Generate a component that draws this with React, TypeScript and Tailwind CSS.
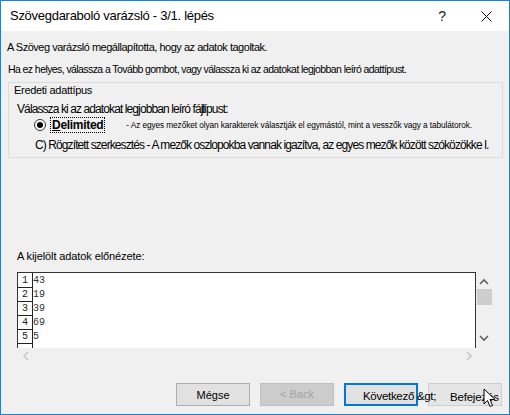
import React from 'react'

const rows = ['43', '19', '39', '69', '5', '']

function Chevron({ dir }: { dir: 'up' | 'down' | 'left' | 'right' }) {
  const paths = {
    up: 'M1 6 L5 2 L9 6',
    down: 'M1 2 L5 6 L9 2',
    left: 'M6 1 L2 5 L6 9',
    right: 'M2 1 L6 5 L2 9',
  }
  const size = dir === 'up' || dir === 'down' ? { w: 10, h: 8 } : { w: 8, h: 10 }
  return (
    <svg width={size.w} height={size.h} viewBox={`0 0 ${size.w} ${size.h}`} fill="none">
      <path d={paths[dir]} stroke="currentColor" strokeWidth="1.6" />
    </svg>
  )
}

export default function App() {
  return (
    <div className="relative flex h-[415px] w-[510px] flex-col border border-[#1883d7] bg-[#f0f0f0] font-['Liberation_Sans',Arial,sans-serif] text-black">
      {/* title bar */}
      <div className="flex h-[30px] shrink-0 items-center bg-white pl-[9px]">
        <span className="whitespace-nowrap text-[13px] tracking-[-0.28px]">Szövegdaraboló varázsló - 3/1. lépés</span>
        <span className="ml-auto mr-[35px] text-[14px] text-[#222]">?</span>
        <svg width="11" height="11" viewBox="0 0 11 11" className="mr-[17px]">
          <path d="M0.5 0.5 L10.5 10.5 M10.5 0.5 L0.5 10.5" stroke="#111" strokeWidth="1" />
        </svg>
      </div>

      <div className="mt-[8px] flex h-[16px] items-center whitespace-nowrap pl-[6px] text-[11px] tracking-[-0.48px]">
        A Szöveg varázsló megállapította, hogy az adatok tagoltak.
      </div>
      <div className="mt-[7px] flex h-[16px] items-center whitespace-nowrap pl-[7px] text-[10.5px] tracking-[-0.58px]">
        Ha ez helyes, válassza a Tovább gombot, vagy válassza ki az adatokat legjobban leíró adattípust.
      </div>

      {/* group box */}
      <div className="ml-[7px] mt-[4px] h-[76px] w-[495px] border border-[#dcdcdc]">
        <div className="flex h-[14px] items-center pl-[5px] text-[11px] tracking-[-0.3px]">Eredeti adattípus</div>
        <div className="mt-[4px] flex h-[16px] items-center whitespace-nowrap pl-[8px] text-[12px] tracking-[-0.9px]">
          Válassza ki az adatokat legjobban leíró fájl<span className="-ml-[3px]">típust:</span>
        </div>
        <div className="flex h-[16px] items-center whitespace-nowrap pl-[25px]">
          <div className="flex h-[12px] w-[12px] shrink-0 items-center justify-center rounded-full border border-[#333] bg-white">
            <div className="h-[6px] w-[6px] rounded-full bg-black" />
          </div>
          <div className="ml-[4px] flex h-[16px] items-center border border-dotted border-black px-[1px] text-[12px] font-semibold tracking-[-0.3px]">
            <span className="underline">D</span>elimited
          </div>
          <span className="ml-[21px] text-[8.3px] tracking-[-0.1px]">
            - Az egyes mezőket olyan karakterek választják el egymástól, mint a vesszők vagy a tabulátorok.
          </span>
        </div>
        <div className="mt-[4px] flex h-[16px] items-center whitespace-nowrap pl-[26px] text-[12px] tracking-[-0.9px]">
          C) Rögzített szerkesztés - A mezők oszlopokba vannak igazítva, az egyes mezők között szóközökke l.
        </div>
      </div>

      <div className="mt-[90px] flex h-[16px] items-center whitespace-nowrap pl-[16px] text-[11px] tracking-[-0.1px]">
        A kijelölt adatok előnézete:
      </div>

      {/* preview */}
      <div className="mt-[8px] flex h-[76px] pl-[16px]">
        <div className="h-[76px] w-[459px] overflow-hidden border-x border-t border-[#333] bg-white">
          {rows.map((value, index) => (
            <div key={index} className="flex h-[14px] font-['Liberation_Mono',monospace] text-[10px]">
              <div className="flex h-[15px] w-[15px] items-center justify-center border-r border-b border-[#222] text-[#222]">
                {value ? index + 1 : ''}
              </div>
              <div className="flex items-center text-[#333]">{value}</div>
            </div>
          ))}
        </div>
        <div className="flex w-[16px] flex-col items-center">
          <div className="mt-[6px] text-[#606060]">
            <Chevron dir="up" />
          </div>
          <div className="mt-[3px] h-[16px] w-[15px] bg-[#cdcdcd]" />
          <div className="mt-auto mb-[6px] text-[#606060]">
            <Chevron dir="down" />
          </div>
        </div>
      </div>
      <div className="flex h-[16px] w-[475px] items-center justify-between pl-[21px] pr-[3px] text-[#c8c8c8]">
        <Chevron dir="left" />
        <Chevron dir="right" />
      </div>

      {/* buttons */}
      <div className="mt-[19px] flex h-[23px] justify-end gap-[10px] pr-[7px] text-[11px]">
        <div className="flex w-[74px] items-center justify-center border border-[#adadad] bg-[#e1e1e1] pt-[1px]">
          Mégse
        </div>
        <div className="flex w-[74px] items-center justify-center border border-[#bfbfbf] bg-[#cccccc] text-[#a3a3a3]">
          &lt; Back
        </div>
        <div className="relative z-10 w-[74px] border-2 border-[#0078d7] bg-[#e1e1e1]">
          <span className="absolute left-[17px] top-[3px] whitespace-nowrap text-[11.5px] tracking-[-0.3px]">
            Következő &amp;gt;
          </span>
        </div>
        <div className="relative w-[74px] border border-[#cfcfcf] bg-[#e5e5e5]">
          <span className="absolute left-[21px] top-[5px] whitespace-nowrap text-[11.5px] tracking-[-0.2px]">
            Befejezés
          </span>
        </div>
      </div>

      {/* mouse cursor */}
      <svg
        width="14"
        height="21"
        viewBox="0 0 14 21"
        className="absolute left-[482px] top-[387px] z-20"
      >
        <path d="M1 1 L1 16 L4.5 12.5 L7 18.5 L9.5 17.5 L7 11.5 L12 11.5 Z" fill="white" stroke="black" strokeWidth="1" />
      </svg>
    </div>
  )
}
